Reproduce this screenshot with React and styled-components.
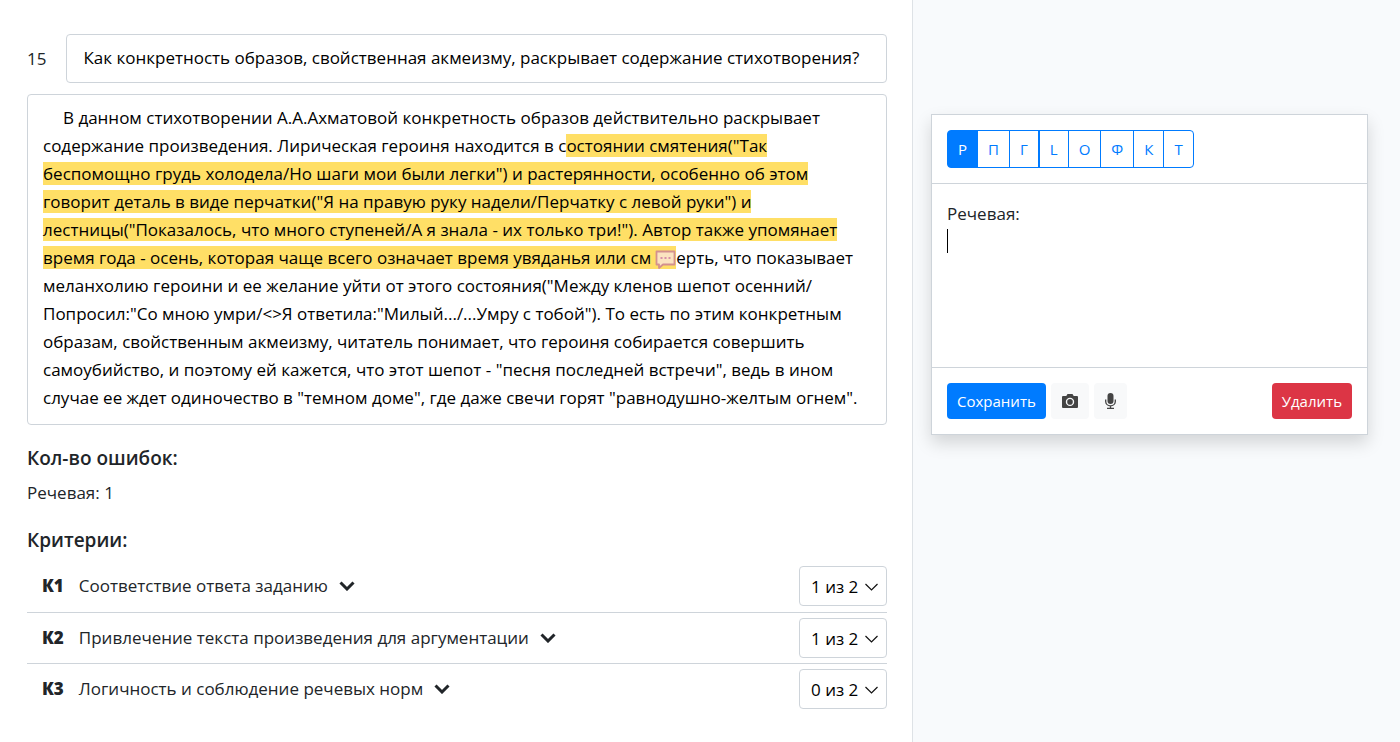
import React, { useState } from 'react';
import styled, { createGlobalStyle } from 'styled-components';

const GlobalStyle = createGlobalStyle`
  * {
    box-sizing: border-box;
  }

  body {
    margin: 0;
    background: #fff;
    color: #212529;
    font-family: "Open Sans", "Noto Sans", sans-serif;
    font-size: 17px;
    line-height: 28px;
  }

  button,
  select,
  textarea {
    font-family: inherit;
  }
`;

const Page = styled.div`
  display: grid;
  grid-template-columns: minmax(0, 15fr) minmax(0, 8fr);
  min-height: 100vh;
`;

const Work = styled.main`
  padding: 34px 25px 24px 27px;
  border-right: 1px solid #dee2e6;
`;

const Sidebar = styled.aside`
  padding: 114px 32px 24px 18px;
  background: #f8fafc;
`;

const QuestionRow = styled.div`
  display: flex;
  align-items: center;
  gap: 20px;
  margin-bottom: 11px;
`;

const Box = styled.div`
  border: 1px solid #ced4da;
  border-radius: 4px;
  color: #000;
`;

const Question = styled(Box)`
  flex: 1;
  padding: 9px 16px 10px;
`;

const Answer = styled(Box)`
  padding: 9px 15px 12px;
  text-indent: 20px;
`;

const Mark = styled.mark`
  background: #ffdf66;
  color: inherit;
`;

const CommentIcon = styled.svg`
  width: 21px;
  height: 19px;
  margin-left: 4px;
  vertical-align: -5px;
`;

const Heading = styled.h2`
  margin: 0 0 7px;
  font-size: 19px;
  font-weight: 600;
  line-height: 28px;
`;

const Section = styled.section`
  margin-top: 19px;
`;

const Text = styled.p`
  margin: 0;
`;

const CriteriaList = styled.ul`
  margin: 0;
  padding: 0;
  list-style: none;
`;

const Criterion = styled.li`
  display: flex;
  align-items: center;
  justify-content: space-between;
  padding: 5px 0 6px;

  & + & {
    border-top: 1px solid #ced4da;
    padding-bottom: 5px;
  }
`;

const CriterionButton = styled.button`
  display: flex;
  align-items: center;
  padding: 0 15px;
  border: none;
  background: none;
  color: #212529;
  font-size: 17px;
  line-height: 28px;
  cursor: pointer;

  b {
    margin-right: 15px;
    font-weight: 800;
  }

  svg {
    width: 16px;
    height: 10px;
    margin-left: 11px;
  }
`;

const SelectWrap = styled.div`
  display: grid;
  align-items: center;
  width: 88px;

  > * {
    grid-area: 1 / 1;
  }

  svg {
    justify-self: end;
    width: 13px;
    height: 8px;
    margin: 2px 9px 0 0;
    pointer-events: none;
  }
`;

const Select = styled.select`
  width: 100%;
  height: 40px;
  padding: 0 11px;
  border: 1px solid #ced4da;
  border-radius: 4px;
  background: #fff;
  color: #000;
  font-size: 17px;
  appearance: none;
`;

const Card = styled.section`
  border: 1px solid #ced4da;
  background: #fff;
  box-shadow: 0 8px 16px rgba(0, 0, 0, 0.15);
`;

const CardHeader = styled.div`
  padding: 15px;
  border-bottom: 1px solid #ced4da;
`;

const TypeGroups = styled.div`
  display: flex;
`;

const TypeGroup = styled.div`
  display: flex;

  &:first-child button:first-child {
    border-radius: 4px 0 0 4px;
  }

  &:last-child button:last-child {
    border-radius: 0 4px 4px 0;
  }
`;

const TypeButton = styled.button`
  height: 38px;
  padding: 0 10px;
  border: 1px solid #007bff;
  background: ${(props) => (props.$active ? '#007bff' : '#fff')};
  color: ${(props) => (props.$active ? '#fff' : '#007bff')};
  font-size: 15px;
  cursor: pointer;

  & + & {
    margin-left: -1px;
  }
`;

const CardBody = styled.div`
  padding: 16px 15px;
`;

const NoteLabel = styled.label`
  display: block;
`;

const NoteField = styled.div`
  display: flex;
  height: 123px;
`;

const Caret = styled.span`
  width: 1px;
  height: 24px;
  margin-top: 1px;
  background: #000;
`;

const Note = styled.textarea`
  flex: 1;
  padding: 0;
  border: none;
  outline: none;
  resize: none;
  background: transparent;
  font-size: 17px;
  line-height: 28px;
  caret-color: transparent;
`;

const CardFooter = styled.div`
  display: flex;
  align-items: center;
  gap: 5px;
  padding: 15px;
  border-top: 1px solid #ced4da;
`;

const Button = styled.button`
  display: inline-flex;
  align-items: center;
  justify-content: center;
  height: 36px;
  padding: 0 10px;
  border: none;
  border-radius: 4px;
  background: ${(props) => props.$color};
  color: #fff;
  font-size: 15px;
  cursor: pointer;
`;

const IconButton = styled(Button)`
  padding: 0 11px;
`;

const DeleteButton = styled(Button)`
  margin-left: auto;
`;

const Chevron = () => (
  <svg viewBox="0 0 16 10" aria-hidden="true">
    <path d="M1.500 1.500 8 8l6.500-6.500" fill="none" stroke="#212529" strokeWidth="3" />
  </svg>
);

const ThinChevron = () => (
  <svg viewBox="0 0 13 8" aria-hidden="true">
    <path d="M.5 1 6.500 7l6-6" fill="none" stroke="#111" strokeWidth="1.200" />
  </svg>
);

const CameraIcon = () => (
  <svg width="16" height="14" viewBox="0 0 16 14" aria-hidden="true">
    <path
      fill="#444"
      fillRule="evenodd"
      d="M5.500 0h5l1.200 2H15a1 1 0 0 1 1 1v10a1 1 0 0 1-1 1H1a1 1 0 0 1-1-1V3a1 1 0 0 1 1-1h3.300zM8 3.700a4.200 4.200 0 1 0 0 8.400 4.200 4.200 0 0 0 0-8.400zm0 1.400a2.800 2.800 0 1 1 0 5.600 2.800 2.800 0 0 1 0-5.600z"
    />
  </svg>
);

const MicIcon = () => (
  <svg width="11" height="16" viewBox="0 0 11 16" aria-hidden="true">
    <rect x="2.500" width="6" height="11" rx="3" fill="#444" />
    <path d="M.7 6.500v2a4.800 4.300 0 0 0 9.600 0v-2M5.500 12.800V15M2 15.300h7" fill="none" stroke="#444" strokeWidth="1.300" />
  </svg>
);

const typeGroups = [
  [
    { letter: 'Р', name: 'Речевая' },
    { letter: 'П', name: 'Пунктуационная' },
    { letter: 'Г', name: 'Грамматическая' },
  ],
  [
    { letter: 'L', name: 'Логическая' },
    { letter: 'О', name: 'Орфографическая' },
    { letter: 'Ф', name: 'Фактическая' },
    { letter: 'К', name: 'Комментарий' },
    { letter: 'Т', name: 'Текстовая' },
  ],
];

const criteria = [
  { code: 'К1', title: 'Соответствие ответа заданию', score: 1 },
  { code: 'К2', title: 'Привлечение текста произведения для аргументации', score: 1 },
  { code: 'К3', title: 'Логичность и соблюдение речевых норм', score: 0 },
];

const App = () => {
  const [active, setActive] = useState(typeGroups[0][0]);
  const [note, setNote] = useState('');

  return (
    <>
      <GlobalStyle />
      <Page>
        <Work>
          <QuestionRow>
            <span>15</span>
            <Question>Как конкретность образов, свойственная акмеизму, раскрывает содержание стихотворения?</Question>
          </QuestionRow>
          <Answer>
            В данном стихотворении А.А.Ахматовой конкретность образов действительно раскрывает
            содержание произведения. Лирическая героиня находится в с<Mark>остоянии смятения("Так
            беспомощно грудь холодела/Но шаги мои были легки") и растерянности, особенно об этом
            говорит деталь в виде перчатки("Я на правую руку надели/Перчатку с левой руки") и
            лестницы("Показалось, что много ступеней/А я знала - их только три!"). Автор также упомянает
            время года - осень, которая чаще всего означает время увяданья или см<CommentIcon viewBox="0 0 21 19" aria-hidden="true">
              <path d="M1.500 1.500h18v13H8l-4 3.500v-3.500H1.500z" fill="#fbe3c0" stroke="#d3908f" strokeWidth="1.800" strokeLinejoin="round" />
              <path d="M5.500 8h2M9.500 8h2M13.500 8h2" stroke="#d68fa8" strokeWidth="2" />
            </CommentIcon></Mark>ерть, что показывает
            меланхолию героини и ее желание уйти от этого состояния("Между кленов шепот осенний/
            Попросил:"Со мною умри/&lt;&gt;Я ответила:"Милый.../...Умру с тобой"). То есть по этим конкретным
            образам, свойственным акмеизму, читатель понимает, что героиня собирается совершить
            самоубийство, и поэтому ей кажется, что этот шепот - "песня последней встречи", ведь в ином
            случае ее ждет одиночество в "темном доме", где даже свечи горят "равнодушно-желтым огнем".
          </Answer>

          <Section>
            <Heading>Кол-во ошибок:</Heading>
            <Text>Речевая: 1</Text>
          </Section>

          <Section>
            <Heading>Критерии:</Heading>
            <CriteriaList>
              {criteria.map((item) => (
                <Criterion key={item.code}>
                  <CriterionButton type="button">
                    <b>{item.code}</b>
                    {item.title}
                    <Chevron />
                  </CriterionButton>
                  <SelectWrap>
                    <Select defaultValue={item.score} aria-label={item.title}>
                      <option value={0}>0 из 2</option>
                      <option value={1}>1 из 2</option>
                      <option value={2}>2 из 2</option>
                    </Select>
                    <ThinChevron />
                  </SelectWrap>
                </Criterion>
              ))}
            </CriteriaList>
          </Section>
        </Work>

        <Sidebar>
          <Card>
            <CardHeader>
              <TypeGroups>
                {typeGroups.map((group, i) => (
                  <TypeGroup key={i}>
                    {group.map((type) => (
                      <TypeButton
                        key={type.letter}
                        type="button"
                        title={type.name}
                        $active={type === active}
                        onClick={() => setActive(type)}
                      >
                        {type.letter}
                      </TypeButton>
                    ))}
                  </TypeGroup>
                ))}
              </TypeGroups>
            </CardHeader>
            <CardBody>
              <NoteLabel htmlFor="note">{active.name}:</NoteLabel>
              <NoteField>
                <Caret />
                <Note id="note" value={note} onChange={(e) => setNote(e.target.value)} />
              </NoteField>
            </CardBody>
            <CardFooter>
              <Button type="button" $color="#007bff">Сохранить</Button>
              <IconButton type="button" $color="#f8f9fa" aria-label="Фото"><CameraIcon /></IconButton>
              <IconButton type="button" $color="#f8f9fa" aria-label="Микрофон"><MicIcon /></IconButton>
              <DeleteButton type="button" $color="#dc3545">Удалить</DeleteButton>
            </CardFooter>
          </Card>
        </Sidebar>
      </Page>
    </>
  );
};

export default App;
